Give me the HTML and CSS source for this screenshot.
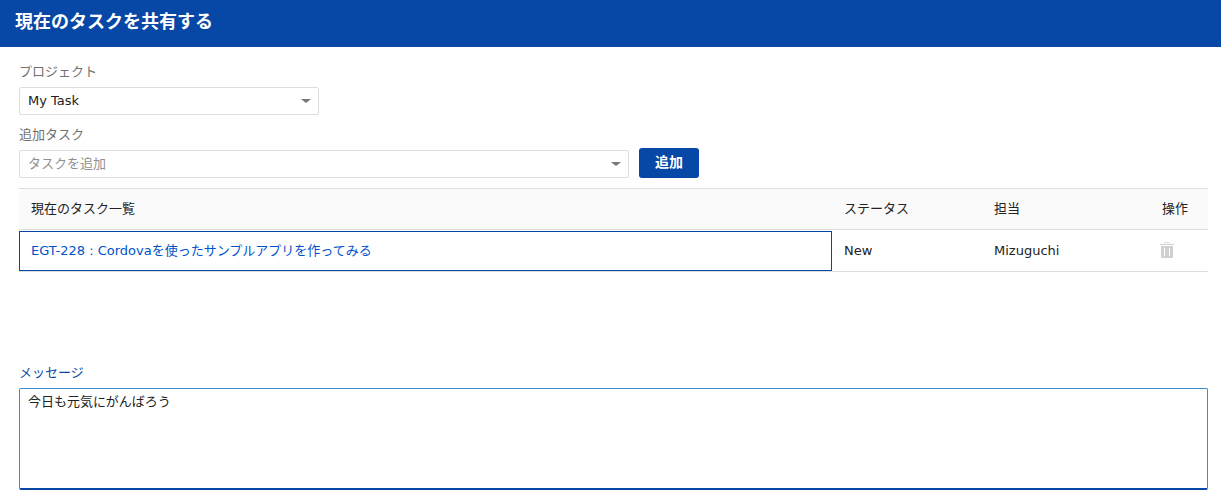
FILE: index.html
```html
<!DOCTYPE html>
<html lang="ja">
<head>
    <meta charset="UTF-8">
    <meta name="viewport" content="width=device-width, initial-scale=1.0">
    <title>現在のタスクを共有する</title>
    <link rel="stylesheet" href="styles.css">
</head>
<body>

<header class="page-header">
    <h1>現在のタスクを共有する</h1>
</header>

<main class="content">
    <div class="field">
        <label for="project">プロジェクト</label>
        <div class="field-row">
            <div class="select project-select">
                <select id="project">
                    <option>My Task</option>
                </select>
            </div>
        </div>
    </div>

    <div class="field">
        <label for="addTask">追加タスク</label>
        <div class="field-row">
            <div class="select task-select">
                <select id="addTask" class="empty">
                    <option value="">タスクを追加</option>
                </select>
            </div>
            <button type="button" class="add-button">追加</button>
        </div>
    </div>

    <div class="task-list">
        <table>
            <thead>
                <tr>
                    <th>現在のタスク一覧</th>
                    <th class="col-status">ステータス</th>
                    <th class="col-user">担当</th>
                    <th class="col-action">操作</th>
                </tr>
            </thead>
            <tbody>
                <tr>
                    <td class="task-cell"><a href="#">EGT-228 : Cordovaを使ったサンプルアプリを作ってみる</a></td>
                    <td>New</td>
                    <td>Mizuguchi</td>
                    <td class="action-cell">
                        <button type="button" class="delete-button" aria-label="削除">
                            <svg width="14" height="16" viewBox="0 0 14 16">
                                <path d="M4.5 2V1.500Q4.500 .5 5.500 .5H8.500Q9.500 .5 9.500 1.500V2" fill="none" stroke="#d8d8d8"/>
                                <path d="M0 2H14V3H0ZM1 4H13V14.500Q13 16 11.500 16H2.500Q1 16 1 14.500ZM4 6V14H5V6ZM9 6V14H10V6Z" fill="#d0d0d0" fill-rule="evenodd"/>
                            </svg>
                        </button>
                    </td>
                </tr>
            </tbody>
        </table>
    </div>

    <div class="field message">
        <label for="message">メッセージ</label>
        <textarea id="message">今日も元気にがんばろう</textarea>
    </div>
</main>

</body>
</html>
```
FILE: styles.css
```css
* {
    box-sizing: border-box;
}
body {
    margin: 0;
    background-color: #fff;
    color: #222;
    font-family: "DejaVu Sans", "Noto Sans CJK JP", sans-serif;
    font-size: 13px;
    line-height: 20px;
}
select, textarea, button {
    font: inherit;
    color: inherit;
}
.page-header {
    padding: 8px 15px 11px;
    background-color: #0747a6;
    color: #fff;
}
.page-header h1 {
    margin: 0;
    font-size: 18px;
    line-height: 28px;
}
.content {
    padding: 15px 13px 8px 19px;
}
.field {
    margin-bottom: 10px;
}
.field label {
    display: block;
    margin-bottom: 3px;
    color: #707070;
}
.field-row {
    display: flex;
    align-items: flex-end;
    gap: 10px;
    min-height: 30px;
}
.select {
    position: relative;
}
.project-select {
    width: 300px;
}
.task-select {
    width: 610px;
}
.select select {
    display: block;
    width: 100%;
    height: 28px;
    padding: 0 24px 0 8px;
    border: 1px solid #ddd;
    border-radius: 2px;
    background-color: #fff;
    appearance: none;
}
.select select.empty {
    color: #909090;
}
.select::after {
    content: "";
    position: absolute;
    top: 12px;
    right: 8px;
    border: 5px solid transparent;
    border-top: 4px solid #777;
    border-bottom: 0;
    pointer-events: none;
}
.add-button {
    width: 60px;
    height: 30px;
    padding: 0 0 2px;
    border: none;
    border-radius: 3px;
    background-color: #0747a6;
    color: #fff;
    font-size: 14px;
    font-weight: bold;
    cursor: pointer;
}
.task-list {
    min-height: 165px;
    margin: 10px 0;
}
table {
    width: 100%;
    border-collapse: separate;
    border-spacing: 0;
    table-layout: fixed;
}
th, td {
    height: 42px;
    padding: 0 12px;
    border-bottom: 1px solid #ddd;
    text-align: left;
    font-weight: normal;
}
th {
    border-top: 1px solid #ddd;
    background-color: #fafafa;
}
.col-status {
    width: 150px;
}
.col-user {
    width: 168px;
}
.col-action {
    width: 58px;
}
.task-cell {
    padding: 1px 0 0;
}
.task-cell a {
    display: block;
    padding: 9px 11px;
    border: 1px solid #0747a6;
    color: #0052cc;
    text-decoration: none;
}
.action-cell {
    padding: 0 10px 2px;
}
.delete-button {
    display: block;
    padding: 0;
    border: none;
    background: none;
    cursor: pointer;
}
.delete-button svg {
    display: block;
}
.message {
    margin-bottom: 0;
}
.message label {
    margin-bottom: 5px;
    color: #0747a6;
}
.message textarea {
    display: block;
    width: 100%;
    height: 102px;
    padding: 3px 8px;
    border: 1px solid #3c8dd0;
    border-bottom: 2px solid #0747a6;
    border-radius: 2px;
    resize: none;
}
```
